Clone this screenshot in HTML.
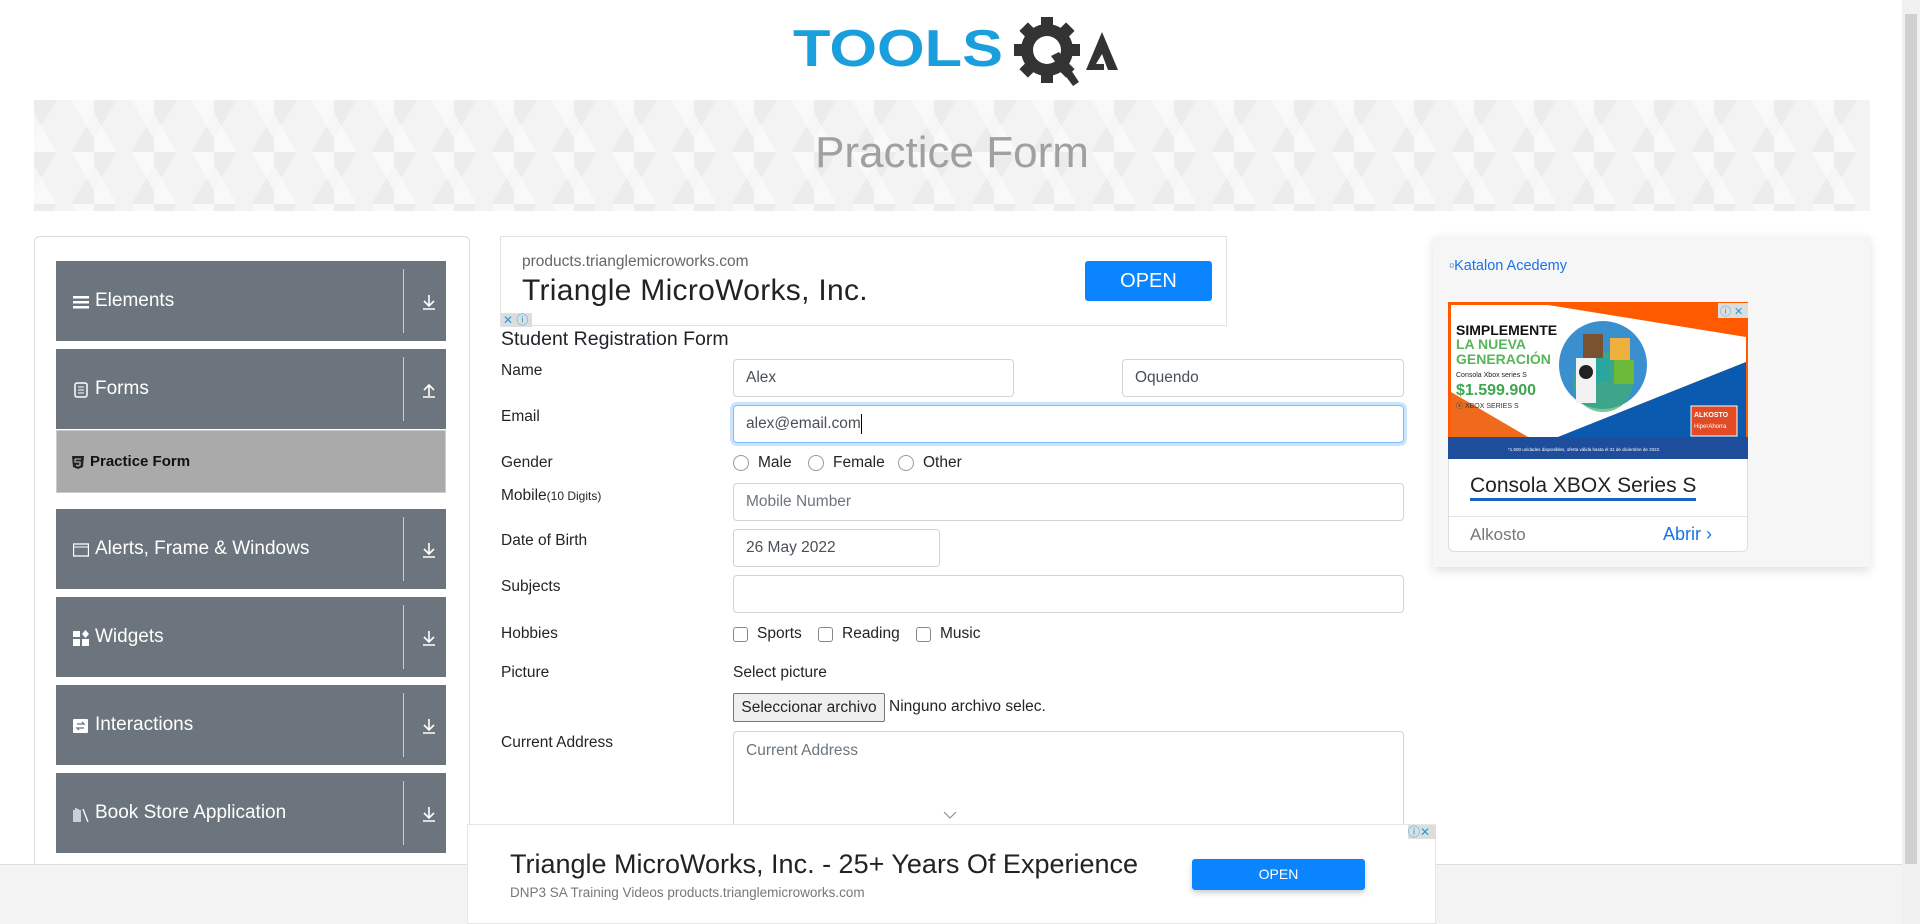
<!DOCTYPE html>
<html><head><meta charset="utf-8">
<style>
*{box-sizing:border-box;margin:0;padding:0}
body{width:1920px;height:924px;overflow:hidden;background:#fff;font-family:"Liberation Sans",sans-serif;color:#212529;position:relative}
.abs{position:absolute}
.banner{left:34px;top:100px;width:1836px;height:111px;background:#f3f3f3;
background-image:linear-gradient(60deg,rgba(255,255,255,.5) 25%,transparent 25%,transparent 75%,rgba(255,255,255,.5) 75%),linear-gradient(-60deg,rgba(230,230,230,.5) 25%,transparent 25%,transparent 75%,rgba(230,230,230,.5) 75%);background-size:60px 52px}
.banner h1{position:absolute;width:100%;text-align:center;top:28px;font-weight:300;font-size:44px;color:#a0a0a0;font-family:"Liberation Sans",sans-serif}
.side{left:34px;top:236px;width:436px;height:640px;border:1px solid #dcdcdc;border-radius:6px}
.item{position:absolute;left:56px;width:390px;height:80px;background:#6c757d;color:#fff;font-size:19px}
.item .t{position:absolute;left:39px;top:29px}
.item .ic{position:absolute;left:17px;top:33px;width:16px;height:16px}
.item .sep{position:absolute;left:347px;top:8px;width:1px;height:64px;background:#ccc}
.item .ar{position:absolute;left:365px;top:31px;width:16px;height:20px}
.pf{position:absolute;left:56px;top:430px;width:390px;height:63px;background:#aaa;border:1px solid #ccc;font-weight:bold;font-size:15px;color:#111}
.lbl{position:absolute;left:501px;font-size:15.5px;color:#212529}
.inp{position:absolute;border:1px solid #ced4da;border-radius:4px;background:#fff;font-size:15.5px;color:#495057;padding:0 12px;display:flex;align-items:center}
.ph{color:#6c757d}
.rad{position:absolute;font-size:15.5px;color:#212529;display:flex;align-items:center}
.circ{width:16px;height:16px;border:1px solid #999;border-radius:50%;margin-right:9px;background:#fff}
.chk{width:15px;height:15px;border:1px solid #888;border-radius:3px;margin-right:9px;background:#fff}
</style></head><body>

<svg class="abs" style="left:790px;top:14px" width="330" height="78" viewBox="0 0 330 78">
<text x="3" y="52" font-family="Liberation Sans" font-weight="bold" font-size="52" fill="#1a9fdc" textLength="210" lengthAdjust="spacingAndGlyphs">TOOLS</text>
<g transform="translate(257,36)" fill="#333">
<circle r="26"/>
<g>
<rect x="-6" y="-33" width="12" height="12"/><rect x="-6" y="21" width="12" height="12"/>
<rect x="-33" y="-6" width="12" height="12"/><rect x="21" y="-6" width="12" height="12"/>
<rect x="-6" y="-33" width="12" height="12" transform="rotate(45)"/><rect x="-6" y="-33" width="12" height="12" transform="rotate(135)"/>
<rect x="-6" y="-33" width="12" height="12" transform="rotate(225)"/><rect x="-6" y="-33" width="12" height="12" transform="rotate(315)"/>
</g>
<circle r="14" fill="#fff"/>
<path d="M4 6 L26 36 L32 32 L12 2Z" fill="#333"/>
</g>
<path d="M296 56 L312 18 L328 56 L318 56 L312 40 L306 50 L314 50 L314 56Z" fill="#333"/>
</svg>

<div class="abs banner"><h1>Practice Form</h1></div>

<div class="abs side"></div>
<div class="item" style="top:261px"><svg class="ic" viewBox="0 0 16 16"><rect x="0" y="2" width="16" height="2.5" fill="#fff"/><rect x="0" y="7" width="16" height="2.5" fill="#fff"/><rect x="0" y="12" width="16" height="2.5" fill="#fff"/></svg><span class="t">Elements</span><div class="sep"></div><svg class="ar" viewBox="0 0 16 20"><path d="M8 3V14M3 9l5 5 5-5M2 17h12" stroke="#fff" stroke-width="1.6" fill="none"/></svg></div>
<div class="item" style="top:349px"><svg class="ic" viewBox="0 0 16 16"><rect x="2" y="1" width="12" height="14" rx="2" fill="none" stroke="#fff" stroke-width="1.5"/><path d="M5 5h6M5 8h6M5 11h6" stroke="#fff"/></svg><span class="t">Forms</span><div class="sep"></div><svg class="ar" viewBox="0 0 16 20"><path d="M8 16V5M3 10l5-5 5 5M2 17h12" stroke="#fff" stroke-width="1.6" fill="none"/></svg></div>
<div class="pf"><svg style="position:absolute;left:15px;top:25px" width="12" height="13" viewBox="0 0 12 13"><path d="M0 0h12l-1 11-5 2-5-2z" fill="#222"/><path d="M3 3h6M3 3v3h5v3l-2 1-2-1" stroke="#aaa" stroke-width="1.3" fill="none"/></svg><span style="position:absolute;left:33px;top:22px">Practice Form</span></div>
<div class="item" style="top:509px"><svg class="ic" viewBox="0 0 16 16"><rect x="0.5" y="2" width="15" height="12" fill="none" stroke="#fff" stroke-width="1.3"/><path d="M0.5 5h15" stroke="#fff"/></svg><span class="t">Alerts, Frame &amp; Windows</span><div class="sep"></div><svg class="ar" viewBox="0 0 16 20"><path d="M8 3V14M3 9l5 5 5-5M2 17h12" stroke="#fff" stroke-width="1.6" fill="none"/></svg></div>
<div class="item" style="top:597px"><svg class="ic" viewBox="0 0 16 16"><rect x="0" y="1" width="7" height="6" fill="#fff"/><rect x="0" y="9" width="7" height="7" fill="#fff"/><rect x="9" y="9" width="7" height="7" fill="#fff"/><path d="M12.5 0l3.5 4-3.5 4-3.5-4z" fill="#fff"/></svg><span class="t">Widgets</span><div class="sep"></div><svg class="ar" viewBox="0 0 16 20"><path d="M8 3V14M3 9l5 5 5-5M2 17h12" stroke="#fff" stroke-width="1.6" fill="none"/></svg></div>
<div class="item" style="top:685px"><svg class="ic" viewBox="0 0 16 16"><rect x="0" y="1" width="15" height="14" rx="1" fill="#fff"/><path d="M4 6h7l-2-2M11 10H4l2 2" stroke="#6c757d" stroke-width="1.3" fill="none"/></svg><span class="t">Interactions</span><div class="sep"></div><svg class="ar" viewBox="0 0 16 20"><path d="M8 3V14M3 9l5 5 5-5M2 17h12" stroke="#fff" stroke-width="1.6" fill="none"/></svg></div>
<div class="item" style="top:773px"><svg class="ic" viewBox="0 0 16 16"><path d="M1 4v12M3 2v14M5 3v13M7 4v12M10 3l5 13" stroke="#fff" stroke-width="1.3"/></svg><span class="t">Book Store Application</span><div class="sep"></div><svg class="ar" viewBox="0 0 16 20"><path d="M8 3V14M3 9l5 5 5-5M2 17h12" stroke="#fff" stroke-width="1.6" fill="none"/></svg></div>

<div class="abs" style="left:500px;top:236px;width:727px;height:90px;border:1px solid #e2e2e2;background:#fff">
<div class="abs" style="left:21px;top:16px;font-size:15.5px;color:#666">products.trianglemicroworks.com</div>
<div class="abs" style="left:21px;top:37px;font-size:30px;color:#222;letter-spacing:.3px">Triangle MicroWorks, Inc.</div>
<div class="abs" style="left:584px;top:24px;width:127px;height:40px;background:#0a84ff;border-radius:3px;color:#fff;font-size:20px;text-align:center;line-height:40px">OPEN</div>
<div class="abs" style="left:0;top:76px;width:31px;height:14px;background:#ddd;color:#1aa0dc;font-size:12px;line-height:14px;padding-left:2px">✕ ⓘ</div>
</div>

<div class="abs" style="left:501px;top:328px;font-size:19.5px;color:#212529">Student Registration Form</div>
<div class="lbl" style="top:362px">Name</div>
<div class="inp" style="left:733px;top:359px;width:281px;height:38px">Alex</div>
<div class="inp" style="left:1122px;top:359px;width:282px;height:38px">Oquendo</div>
<div class="lbl" style="top:408px">Email</div>
<div class="inp" style="left:733px;top:405px;width:671px;height:38px;border-color:#80bdff;box-shadow:0 0 0 3px rgba(0,123,255,.2)">alex@email.com<span style="width:1px;height:20px;background:#000;display:inline-block"></span></div>
<div class="lbl" style="top:454px">Gender</div>
<div class="rad" style="left:733px;top:454px"><span class="circ"></span>Male</div>
<div class="rad" style="left:808px;top:454px"><span class="circ"></span>Female</div>
<div class="rad" style="left:898px;top:454px"><span class="circ"></span>Other</div>
<div class="lbl" style="top:487px">Mobile<span style="font-size:12px">(10 Digits)</span></div>
<div class="inp ph" style="left:733px;top:483px;width:671px;height:38px">Mobile Number</div>
<div class="lbl" style="top:532px">Date of Birth</div>
<div class="inp" style="left:733px;top:529px;width:207px;height:38px">26 May 2022</div>
<div class="lbl" style="top:578px">Subjects</div>
<div class="inp" style="left:733px;top:575px;width:671px;height:38px"></div>
<div class="lbl" style="top:625px">Hobbies</div>
<div class="rad" style="left:733px;top:625px"><span class="chk"></span>Sports</div>
<div class="rad" style="left:818px;top:625px"><span class="chk"></span>Reading</div>
<div class="rad" style="left:916px;top:625px"><span class="chk"></span>Music</div>
<div class="lbl" style="top:664px">Picture</div>
<div class="abs" style="left:733px;top:664px;font-size:15.5px">Select picture</div>
<div class="abs" style="left:733px;top:693px;width:152px;height:29px;border:1px solid #767676;background:#efefef;border-radius:2px;font-size:15.5px;text-align:center;line-height:27px">Seleccionar archivo</div>
<div class="abs" style="left:889px;top:698px;font-size:15.5px">Ninguno archivo selec.</div>
<div class="lbl" style="top:734px">Current Address</div>
<div class="inp ph" style="left:733px;top:731px;width:671px;height:150px;align-items:flex-start;padding-top:10px">Current Address</div>
<svg class="abs" style="left:943px;top:810px" width="14" height="10"><path d="M1 2l6 6 6-6" stroke="#888" fill="none"/></svg>

<div class="abs" style="left:1433px;top:236px;width:437px;height:331px;background:#f6f6f6;box-shadow:0 4px 10px rgba(0,0,0,.12)">
<div class="abs" style="left:16px;top:22px;font-size:14.5px;color:#1a73e8">▫Katalon Acedemy</div>
<svg class="abs" style="left:15px;top:66px" width="300" height="157" viewBox="0 0 300 157">
<rect width="300" height="157" fill="#ff5a00"/>
<path d="M3 3 L100 3 L298 35 L298 60 L110 135 L3 135Z" fill="#fff"/>
<path d="M298 60 L298 135 L110 135Z" fill="#0a5bb0"/>
<path d="M3 90 L3 135 L80 135Z" fill="#ef6a1a"/>
<rect y="135" width="300" height="22" fill="#1e4d9c"/>
<circle cx="155" cy="63" r="44" fill="#3a8fcf"/>
<circle cx="155" cy="80" r="30" fill="#3fae6b" opacity=".7"/>
<rect x="135" y="32" width="20" height="24" fill="#7a5230"/><rect x="162" y="36" width="20" height="22" fill="#f0b040"/>
<rect x="140" y="56" width="22" height="24" fill="#2aa6a0"/><rect x="166" y="58" width="20" height="24" fill="#6cba3a"/>
<rect x="128" y="56" width="20" height="45" fill="#f2f2f2"/><circle cx="138" cy="70" r="7" fill="#222"/>
<text x="8" y="33" font-size="14" font-weight="bold" fill="#111" font-family="Liberation Sans">SIMPLEMENTE</text>
<text x="8" y="47" font-size="14" font-weight="bold" fill="#57b55a" font-family="Liberation Sans">LA NUEVA</text>
<text x="8" y="62" font-size="14" font-weight="bold" fill="#57b55a" font-family="Liberation Sans">GENERACIÓN</text>
<text x="8" y="75" font-size="7" fill="#222" font-family="Liberation Sans">Consola Xbox series S</text>
<text x="8" y="93" font-size="16" font-weight="bold" fill="#3fa650" font-family="Liberation Sans">$1.599.900</text>
<text x="8" y="106" font-size="7" fill="#333" font-family="Liberation Sans">ⓧ XBOX SERIES S</text>
<rect x="243" y="104" width="46" height="30" fill="#e24b26" stroke="#fff"/>
<text x="246" y="115" font-size="7" font-weight="bold" fill="#fff" font-family="Liberation Sans">ALKOSTO</text>
<text x="246" y="126" font-size="6" fill="#fff" font-family="Liberation Sans">HiperAhorra</text>
<text x="60" y="149" font-size="4.5" fill="#fff" font-family="Liberation Sans">*1.500 unidades disponibles, oferta válida hasta el 31 de diciembre de 2022.</text>
<rect x="270" y="1" width="30" height="15" fill="#ddd"/><text x="272" y="13" font-size="11" fill="#1aa0dc" font-family="Liberation Sans">ⓘ ✕</text>
</svg>
<div class="abs" style="left:15px;top:223px;width:300px;height:93px;background:#fff;border:1px solid #ddd;border-top:none;border-radius:0 0 6px 6px">
<div class="abs" style="left:21px;top:15px;font-size:21px;color:#222;border-bottom:3px solid #1565c0;line-height:24px">Consola XBOX Series S</div>
<div class="abs" style="left:0;top:57px;width:100%;height:1px;background:#e5e5e5"></div>
<div class="abs" style="left:21px;top:66px;font-size:17px;color:#777">Alkosto</div>
<div class="abs" style="left:214px;top:65px;font-size:18px;color:#1a73e8">Abrir ›</div>
</div>
</div>

<div class="abs" style="left:0;top:864px;width:1902px;height:60px;background:#f3f3f3;border-top:1px solid #ddd"></div>

<div class="abs" style="left:467px;top:824px;width:969px;height:100px;background:#fff;border:1px solid #e6e6e6">
<div class="abs" style="left:42px;top:24px;font-size:27px;color:#222">Triangle MicroWorks, Inc. - 25+ Years Of Experience</div>
<div class="abs" style="left:42px;top:60px;font-size:13.5px;color:#777">DNP3 SA Training Videos products.trianglemicroworks.com</div>
<div class="abs" style="left:724px;top:34px;width:173px;height:31px;background:#0a84ff;border-radius:3px;color:#fff;font-size:14px;text-align:center;line-height:31px;box-shadow:0 3px 6px rgba(0,0,0,.2)">OPEN</div>
<div class="abs" style="left:940px;top:0;width:28px;height:14px;background:#ddd;color:#1aa0dc;font-size:12px;line-height:14px">ⓘ✕</div>
</div>

<div class="abs" style="left:1902px;top:0;width:18px;height:924px;background:#f1f1f1"></div>
<div class="abs" style="left:1905px;top:14px;width:12px;height:850px;background:#d0d0d0"></div>
</body></html>
